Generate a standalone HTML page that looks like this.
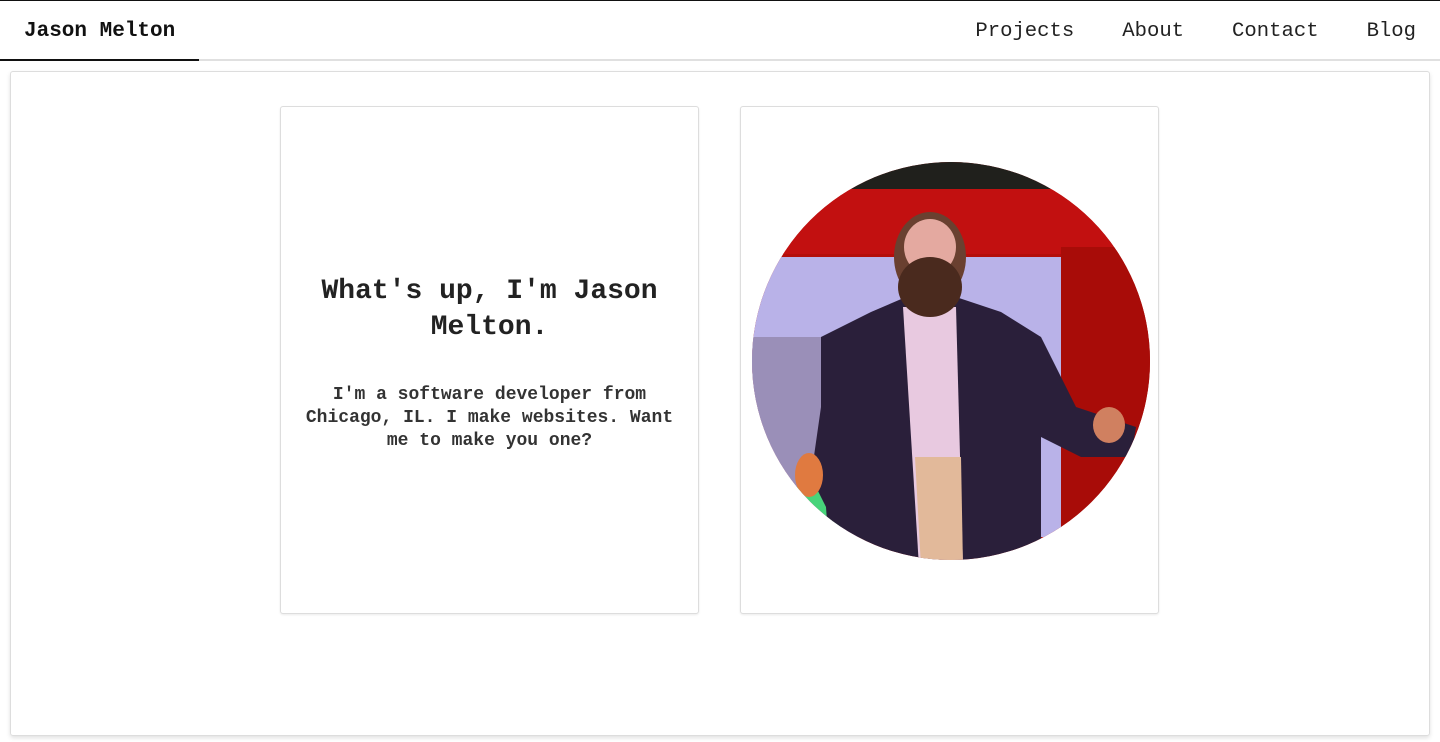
<!DOCTYPE html>
<html><head><meta charset="utf-8"><style>
*{margin:0;padding:0;box-sizing:border-box}
body{width:1440px;height:742px;background:#fff;font-family:"Liberation Mono",monospace;color:#222;position:relative;overflow:hidden}
.top{position:absolute;left:0;top:0;width:1440px;height:1px;background:#111}
.nav{position:absolute;left:0;top:1px;width:1440px;height:60px;border-bottom:2px solid #e0e0e0}
.brand{position:absolute;left:0;top:0;width:199px;height:60px;border-bottom:2px solid #111;font-weight:bold;font-size:21px;line-height:62px;padding-left:24px;color:#111}
.links{position:absolute;right:24px;top:0;line-height:62px;font-size:20.6px;color:#222}
.links span{margin-left:48px}
.box{position:absolute;left:10px;top:71px;width:1420px;height:665px;border:1px solid #ddd;border-radius:3px;box-shadow:0 2px 4px rgba(0,0,0,.12)}
.card{position:absolute;top:106px;width:419px;height:508px;border:1px solid #ddd;border-radius:3px;box-shadow:0 1px 2px rgba(0,0,0,.08);background:#fff}
h1{position:absolute;left:0;width:100%;top:167px;text-align:center;font-size:28px;line-height:36px;font-weight:bold;color:#222;padding:0 20px}
p{position:absolute;left:0;width:100%;top:277px;text-align:center;font-size:18px;line-height:23px;font-weight:bold;color:#333;padding:0 18px}
</style></head><body>
<div class="top"></div>
<div class="nav"><div class="brand">Jason Melton</div>
<div class="links"><span>Projects</span><span>About</span><span>Contact</span><span>Blog</span></div></div>
<div class="box"></div>
<div class="card" style="left:280px"><h1>What's up, I'm Jason Melton.</h1><p>I'm a software developer from Chicago, IL. I make websites. Want me to make you one?</p></div>
<div class="card" style="left:740px">
<svg width="419" height="508" style="position:absolute;left:0;top:0">
<defs><clipPath id="c"><circle cx="210" cy="254" r="199"/></clipPath></defs>
<g clip-path="url(#c)">
<rect x="0" y="0" width="419" height="508" fill="#b40e0a"/>
<rect x="0" y="0" width="419" height="82" fill="#20201c"/>
<rect x="0" y="82" width="419" height="65" fill="#c21010"/>
<rect x="0" y="150" width="320" height="280" fill="#b9b2e8"/>
<rect x="10" y="230" width="80" height="150" fill="#9a8fb8"/>
<rect x="0" y="380" width="100" height="60" fill="#47d47a"/>
<rect x="320" y="140" width="99" height="300" fill="#a80c08"/>
<path d="M80 230 L130 205 L165 190 L215 190 L260 205 L300 230 L335 300 L395 320 L390 350 L340 350 L300 330 L300 470 L90 470 L85 400 L70 370 L80 300 Z" fill="#2a1f3a"/>
<path d="M162 200 L215 200 L222 460 L178 460 Z" fill="#e8c9e0"/>
<path d="M174 350 L220 350 L222 460 L180 460 Z" fill="#e2b99a"/>
<ellipse cx="189" cy="150" rx="36" ry="45" fill="#6a4030"/>
<ellipse cx="189" cy="140" rx="26" ry="28" fill="#e4a9a0"/>
<ellipse cx="189" cy="180" rx="32" ry="30" fill="#4a2a1e"/>
<ellipse cx="68" cy="368" rx="14" ry="22" fill="#e07a40"/>
<ellipse cx="368" cy="318" rx="16" ry="18" fill="#d08060"/>
</g></svg></div>
</body></html>
